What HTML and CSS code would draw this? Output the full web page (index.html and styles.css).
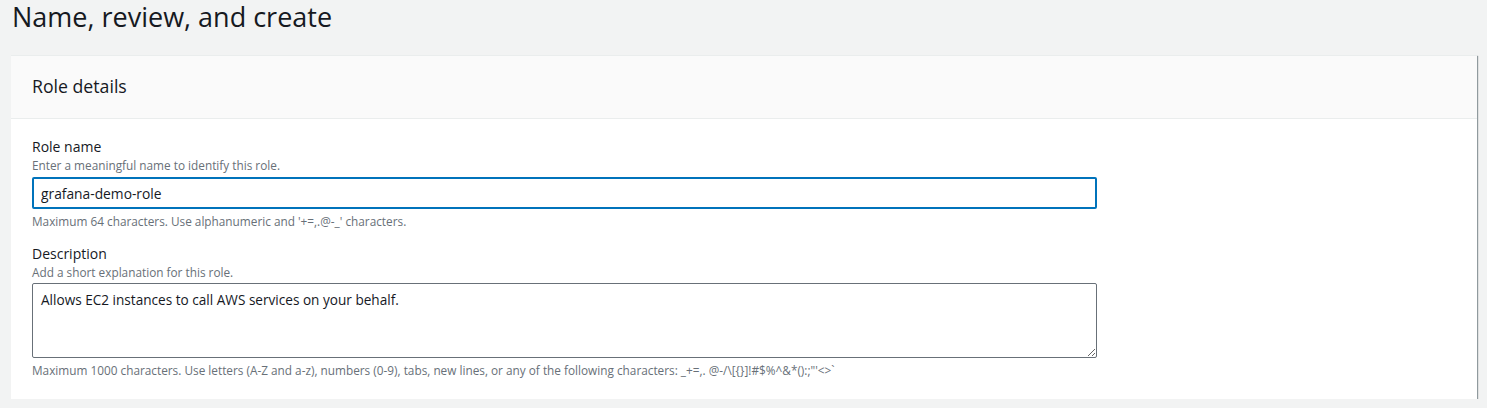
FILE: index.html
```html
<!DOCTYPE html>
<html lang="en">
<head>
<meta charset="utf-8">
<title>Name, review, and create</title>
<link rel="stylesheet" href="styles.css">
</head>
<body>
<main class="page">
  <h1 class="page-title">Name, review, and create</h1>
  <section class="card">
    <header class="card-header">
      <h2 class="card-title">Role details</h2>
    </header>
    <div class="card-body">
      <div class="field">
        <label class="field-label" for="role-name">Role name</label>
        <div class="field-hint">Enter a meaningful name to identify this role.</div>
        <input class="text-input is-focused" id="role-name" type="text" value="grafana-demo-role">
        <div class="field-constraint">Maximum 64 characters. Use alphanumeric and '+=,.@-_' characters.</div>
      </div>
      <div class="field">
        <label class="field-label" for="role-desc">Description</label>
        <div class="field-hint">Add a short explanation for this role.</div>
        <textarea class="text-area" id="role-desc">Allows EC2 instances to call AWS services on your behalf.</textarea>
        <div class="field-constraint">Maximum 1000 characters. Use letters (A-Z and a-z), numbers (0-9), tabs, new lines, or any of the following characters: _+=,. @-/\[{}]!#$%^&amp;*():;"'&lt;&gt;`</div>
      </div>
    </div>
  </section>
</main>
</body>
</html>
```

FILE: styles.css
```css
html, body {
  margin: 0;
  padding: 0;
  background: #f2f3f3;
}

body {
  font-family: "Open Sans", "Noto Sans", Arial, sans-serif;
  color: #16191f;
}

.page {
  padding: 0 10px 0 11px;
}

.page-title {
  margin: 0;
  padding-left: 1px;
  font-size: 27px;
  font-weight: 400;
  line-height: 34px;
  color: #16191f;
}

.card {
  margin-top: 21px;
  background: #ffffff;
  border-top: 1px solid #eaeded;
  box-shadow: 1px 1px 1px 0 rgba(0, 28, 36, 0.3), 1px 1px 1px 0 rgba(0, 28, 36, 0.15);
}

.card-header {
  background: #fafafa;
  border-bottom: 1px solid #eaeded;
  padding: 19px 21px 21px;
}

.card-title {
  margin: 0;
  font-size: 17.7px;
  font-weight: 400;
  line-height: 22px;
}

.card-body {
  padding: 18px 21px 21px;
}

.field + .field {
  margin-top: 15px;
}

.field-label {
  display: block;
  font-size: 14px;
  line-height: 20px;
  color: #16191f;
}

.field-hint {
  font-size: 11.8px;
  line-height: 16px;
  color: #687078;
}

.field-constraint {
  margin-top: 4px;
  font-size: 11.8px;
  line-height: 16px;
  color: #687078;
}

.text-input,
.text-area {
  display: block;
  box-sizing: border-box;
  width: 1065px;
  margin-top: 4px;
  font-family: inherit;
  font-size: 13.8px;
  color: #16191f;
  background: #ffffff;
  border-radius: 2px;
  outline: none;
}

.text-input {
  height: 32px;
  padding: 0 8px;
  border: 1px solid #aab7b8;
}

.text-input.is-focused {
  border: 2px solid #0073bb;
  padding: 0 7px;
}

.text-area {
  height: 75px;
  margin-top: 3px;
  padding: 5px 8px;
  border: 1px solid #687078;
  font-size: 13.6px;
  line-height: 22px;
  resize: vertical;
}
```
